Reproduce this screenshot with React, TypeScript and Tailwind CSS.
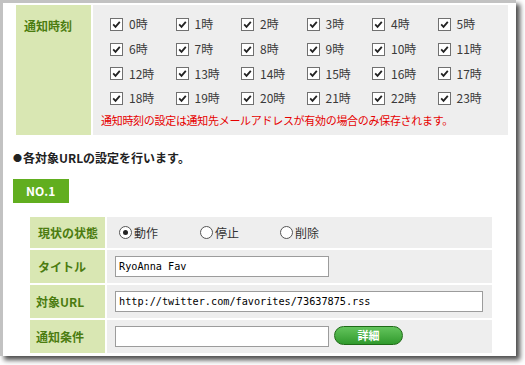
import React from "react";

const jp = { fontFamily: '"Noto Sans CJK JP", "Noto Sans", sans-serif' };
const mono = { fontFamily: '"DejaVu Sans Mono", "Liberation Mono", monospace' };

function Check() {
  return (
    <span className="w-[13px] h-[13px] border border-[#707070] bg-white flex items-center justify-center shrink-0">
      <svg width="9" height="9" viewBox="0 0 9 9">
        <path d="M1.2 4.4 L3.5 6.8 L7.8 1.8" fill="none" stroke="#222" strokeWidth="1.8" />
      </svg>
    </span>
  );
}

function Radio({ on }: { on?: boolean }) {
  return (
    <span className="w-[13px] h-[13px] rounded-full border border-[#555] bg-white flex items-center justify-center shrink-0">
      {on && <span className="w-[5px] h-[5px] rounded-full bg-[#222]" />}
    </span>
  );
}

export default function App() {
  const hours = Array.from({ length: 24 }, (_, i) => i);
  return (
    <div className="w-[525px] h-[365px] bg-white overflow-hidden" style={jp}>
      <div className="w-[516px] h-[356px] bg-white border-l-[3px] border-t-[3px] border-[#c2c2c2] shadow-[4px_4px_5px_rgba(0,0,0,0.7)] pl-[10px] pt-[2px]">
        {/* 通知時刻 table */}
        <div className="ml-[3px] w-[492px] h-[130px] flex gap-[2px]">
          <div className="w-[75px] bg-[#d9e7b3] pl-[8px] pt-[7px]">
            <span className="text-[12px] leading-[16px] font-bold text-[#4b7c10]">通知時刻</span>
          </div>
          <div className="flex-1 bg-[#eeeeee] pl-[8px] pt-[7px]">
            <div className="pl-[9px] grid grid-cols-[repeat(6,65.5px)]">
              {hours.map((h) => (
                <div key={h} className="h-[24.7px] flex items-center">
                  <Check />
                  <span className="ml-[6px] text-[12px] leading-[16px] text-[#3a3a3a]">{h}時</span>
                </div>
              ))}
            </div>
            <div className="mt-[1px] text-[11px] tracking-[-0.3px] leading-[16px] text-[#e60000]">
              通知時刻の設定は通知先メールアドレスが有効の場合のみ保存されます。
            </div>
          </div>
        </div>

        <div className="mt-[15px] text-[12px] leading-[16px] font-bold text-[#222] flex items-center">
          <span className="text-[9px] mr-[1px]">●</span>
          <span>各対象URLの設定を行います。</span>
        </div>

        <div className="mt-[13px] w-[56px] h-[24px] bg-[#61ae1f] flex items-center pl-[13px]">
          <span className="text-[12px] font-bold text-white">NO.1</span>
        </div>

        <div className="mt-[14px] ml-[17px] w-[462px] flex flex-col gap-[2px]">
          <div className="h-[31px] flex gap-[2px]">
            <div className="w-[75px] bg-[#d9e7b3] pl-[8px] flex items-center">
              <span className="text-[12px] font-bold text-[#4b7c10]">現状の状態</span>
            </div>
            <div className="flex-1 bg-[#eeeeee] pl-[12px] flex items-center">
              <div className="w-[81px] flex items-center gap-[2px]">
                <Radio on />
                <span className="text-[12px] text-[#333]">動作</span>
              </div>
              <div className="w-[80px] flex items-center gap-[2px]">
                <Radio />
                <span className="text-[12px] text-[#333]">停止</span>
              </div>
              <div className="flex items-center gap-[2px]">
                <Radio />
                <span className="text-[12px] text-[#333]">削除</span>
              </div>
            </div>
          </div>

          <div className="h-[33px] flex gap-[2px]">
            <div className="w-[75px] bg-[#d9e7b3] pl-[8px] flex items-center">
              <span className="text-[12px] font-bold text-[#4b7c10]">タイトル</span>
            </div>
            <div className="flex-1 bg-[#eeeeee] pl-[8px] flex items-center">
              <div className="w-[214px] h-[21px] border border-[#9c9c9c] bg-white pl-[3px] flex items-center text-[10.2px] text-black" style={mono}>
                RyoAnna Fav
              </div>
            </div>
          </div>

          <div className="h-[33px] flex gap-[2px]">
            <div className="w-[75px] bg-[#d9e7b3] pl-[6px] flex items-center">
              <span className="text-[12px] font-bold text-[#4b7c10]">対象URL</span>
            </div>
            <div className="flex-1 bg-[#eeeeee] pl-[8px] flex items-center">
              <div className="w-[368px] h-[21px] border border-[#9c9c9c] bg-white pl-[3px] flex items-center text-[10.2px] text-black" style={mono}>
                http://twitter.com/favorites/73637875.rss
              </div>
            </div>
          </div>

          <div className="h-[33px] flex gap-[2px]">
            <div className="w-[75px] bg-[#d9e7b3] pl-[6px] flex items-center">
              <span className="text-[12px] font-bold text-[#4b7c10]">通知条件</span>
            </div>
            <div className="flex-1 bg-[#eeeeee] pl-[8px] flex items-center">
              <div className="w-[214px] h-[21px] border border-[#9c9c9c] bg-white" />
              <div className="ml-[5px] mb-[2px] w-[69px] h-[19px] rounded-full border border-[#1f6b17] bg-gradient-to-b from-[#63c45c] to-[#2f9a2c] flex items-center justify-center">
                <span className="text-[11px] font-bold text-white leading-none">詳細</span>
              </div>
            </div>
          </div>
        </div>
      </div>
    </div>
  );
}
